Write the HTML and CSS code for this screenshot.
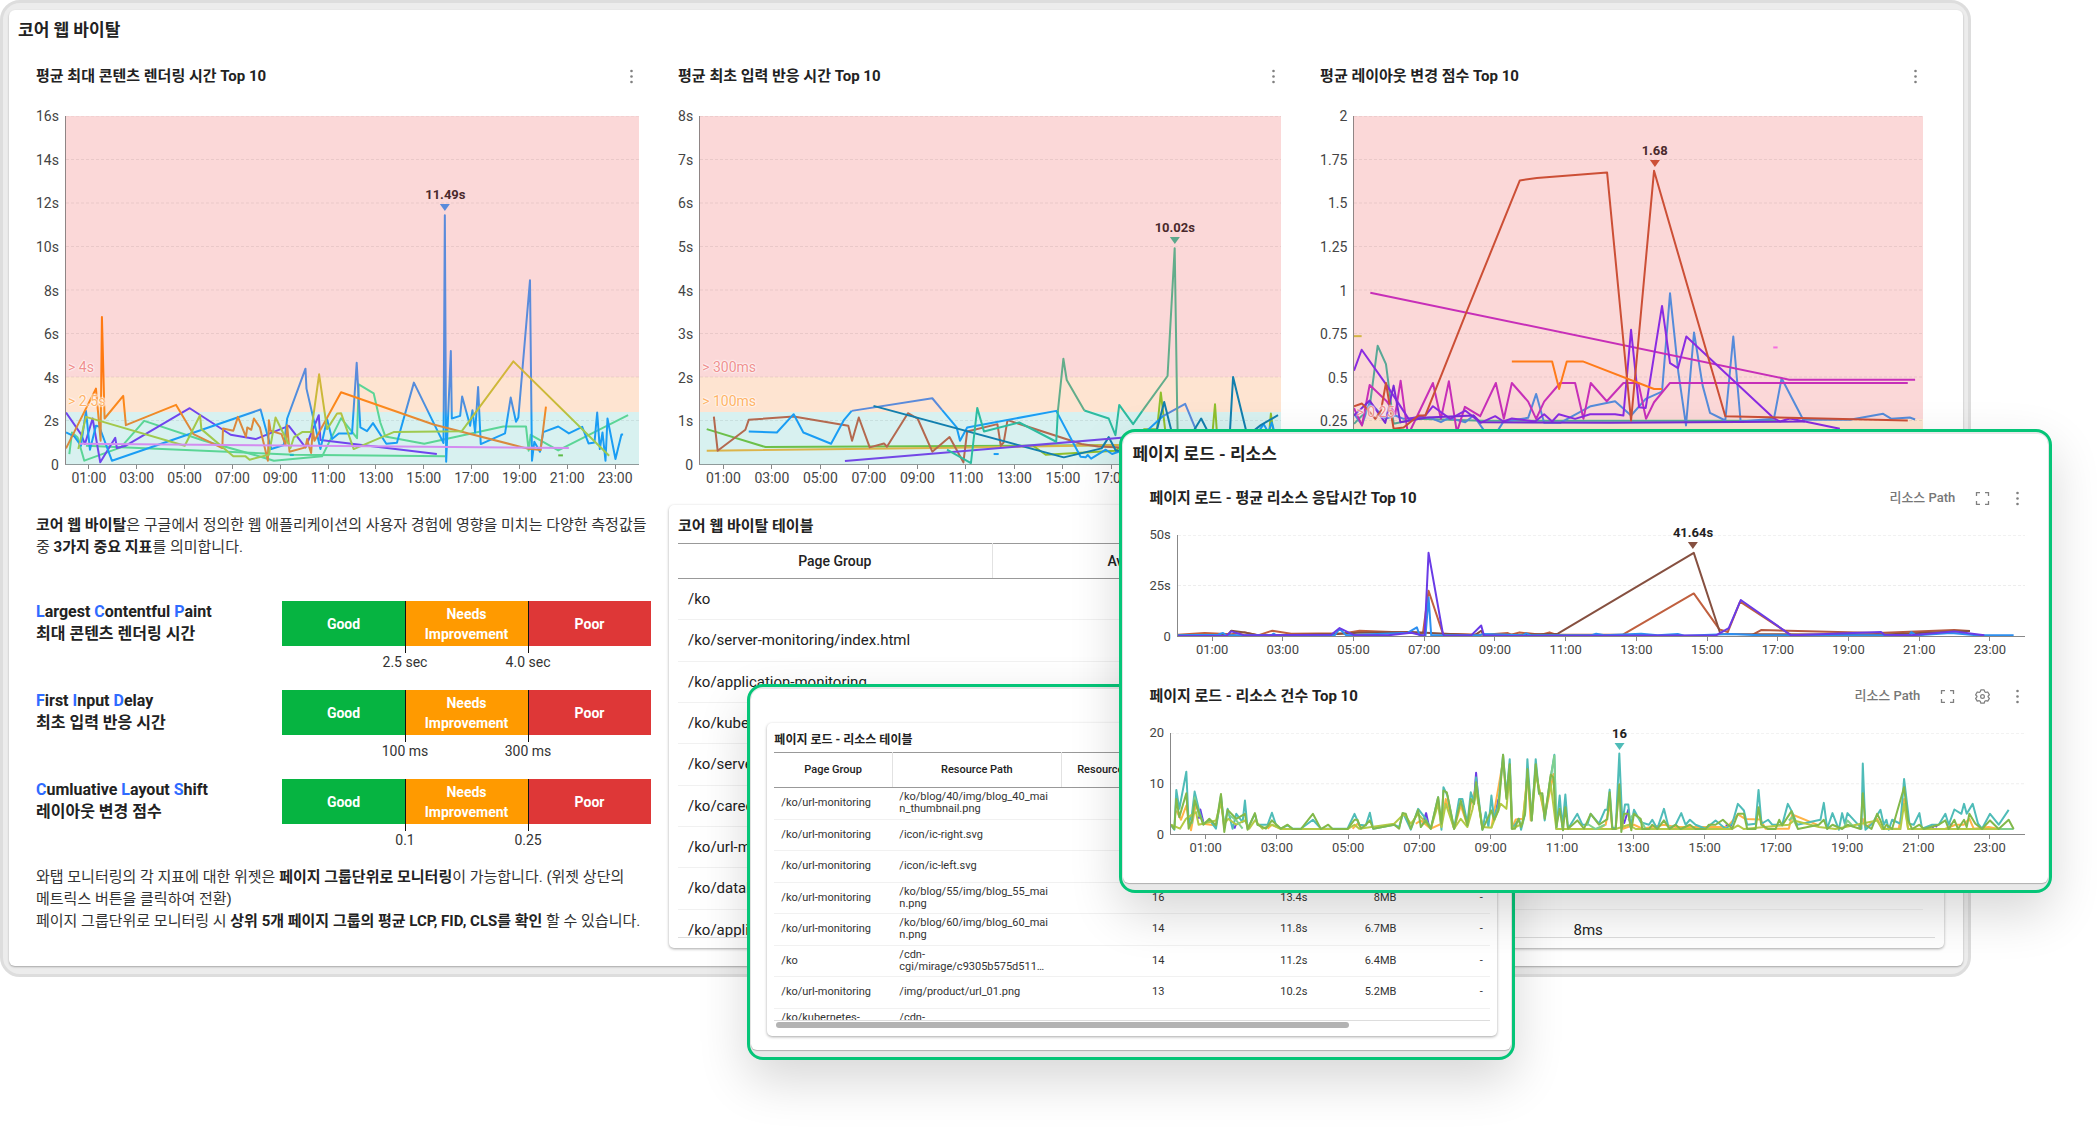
FILE: index.html
```html
<!DOCTYPE html>
<html lang="ko">
<head>
<meta charset="utf-8">
<meta name="viewport" content="width=device-width, initial-scale=1">
<title>코어 웹 바이탈</title>
<link rel="stylesheet" href="styles.css">
</head>
<body>
<svg class="sprite" aria-hidden="true">
  <symbol id="i-more" viewBox="0 0 15 15"><circle cx="7.500" cy="2" r="1.300"/><circle cx="7.500" cy="7.500" r="1.300"/><circle cx="7.500" cy="13" r="1.300"/></symbol>
  <symbol id="i-full" viewBox="0 0 15 15"><path d="M5 1.700H1.500V5M10 1.700h3.500V5M5 13.300H1.500V10M10 13.300h3.500V10" fill="none" stroke="currentColor" stroke-width="1.300"/></symbol>
  <symbol id="i-gear" viewBox="0 0 24 24"><g fill="none" stroke="currentColor" stroke-width="2" stroke-linejoin="round"><path d="M9.400 1.500h5.200l1 3 1.700 1 3.100-.700 2.600 4.500-2.100 2.300v1l2.100 2.300-2.600 4.500-3.100-.700-1.700 1-1 3H9.400l-1-3-1.700-1-3.100.700L1 14.900l2.100-2.300v-1L1 9.300l2.600-4.500 3.100.700 1.700-1z"/><circle cx="12" cy="12.100" r="3"/></g></symbol>
</svg>

<main class="stage">
  <section class="board">
    <div class="board-body">
      <h1 class="board-title">코어 웹 바이탈</h1>

      <div class="widgets">
        <article class="widget">
          <header class="widget-head"><h2>평균 최대 콘텐츠 렌더링 시간 Top 10</h2>
            <button class="icon-btn" type="button" aria-label="메뉴"><svg><use href="#i-more"/></svg></button></header>
          <div class="chart">
            <ul class="y-axis"><li>16s</li><li>14s</li><li>12s</li><li>10s</li><li>8s</li><li>6s</li><li>4s</li><li>2s</li><li>0</li></ul>
            <div class="plot plot-vitals">
              <svg viewBox="15 -673 1723 1048" preserveAspectRatio="none">
                <defs>
                  <linearGradient id="blue" gradientUnits="userSpaceOnUse" x1="0" y1="113" x2="0" y2="233"><stop offset="0" stop-color="#5a8bdb"/><stop offset=".8" stop-color="#4b90de"/><stop offset="1" stop-color="#1a9df4"/></linearGradient>
                  <linearGradient id="orange" gradientUnits="userSpaceOnUse" x1="0" y1="113" x2="0" y2="263"><stop offset="0" stop-color="#ff7a12"/><stop offset=".6" stop-color="#fb8a1c"/><stop offset="1" stop-color="#d9893f"/></linearGradient>
                  <linearGradient id="gold" gradientUnits="userSpaceOnUse" x1="0" y1="113" x2="0" y2="263"><stop offset="0" stop-color="#d2b63a"/><stop offset=".6" stop-color="#c6bb38"/><stop offset="1" stop-color="#9fca4e"/></linearGradient>
                </defs>
                <path class="grid" d="M15-673H1738M15-542H1738M15-411H1738M15-280H1738M15-149H1738M15-18H1738M15 113H1738M15 244H1738"/>
                <polyline stroke="#5bd596" points="25,345 33,280 50,295 70,365 180,325 250,245 430,305 590,350 640,365 785,352 842,237 890,297 895,135 940,162 960,250 975,292 1092,314 1330,262 1398,262 1406,335 1412,287 1495,334 1705,228"/>
                <polyline stroke="#5bd596" points="75,320 700,347 1155,352"/>
                <polyline stroke="#6f45ee" points="15,220 60,285 72,315 95,238 118,370 163,296 168,327 195,320 387,207 510,287 585,300 685,260 735,325 775,228 780,303 1130,345"/>
                <polyline stroke="url(#blue)" points="15,280 40,292 60,320 75,215 87,332 105,260 115,262 153,365 600,211 632,330 670,318 680,238 735,88 738,148 780,330 800,240 815,300 835,283 875,283 889,70 900,265 920,276 938,252 978,314 1010,311 1020,275 1061,130 1150,312 1154,-374 1158,368 1172,35 1175,238 1200,230 1206,172 1230,260 1237,213 1245,280 1254,143 1262,315 1335,283 1352,175 1368,248 1375,235 1410,-178 1416,365 1423,308 1440,338 1450,279 1495,262 1527,283 1567,263 1586,313 1604,310 1612,220 1620,330 1628,280 1637,365 1643,238 1667,360 1685,286 1690,286"/>
                <polyline stroke="url(#orange)" points="15,328 105,148 119,305 123,-68 131,238 187,170 195,258 346,197 398,285 485,327 487,268 518,275 532,233 556,293 560,265 572,272 580,238 598,265 622,365 625,243 630,275 663,285 675,318 680,258 687,338 735,325 740,300 745,320 752,342 757,270 762,305 842,159 1120,256 1400,328 1442,333 1458,202"/>
                <polyline stroke="url(#gold)" points="52,330 75,233 372,320 418,228 422,270 518,352 555,352 567,362 625,347 645,235 690,327 700,295 725,279 752,279 776,105 800,270 830,223 842,222 880,330 1000,279 1205,276 1360,66 1648,350"/>
                <polyline stroke="#d38df0" points="55,314 1527,327"/>
                <path stroke="#1fb8c4" d="M688 348h12"/><path stroke="#5dbb46" d="M1495 349h14"/>
              </svg>
              <span class="limit limit-poor">&gt; 4s</span><span class="limit limit-mid">&gt; 2.5s</span>
              <span class="pin pin-tint" style="left:66.2%;top:27.2%;color:#5a8bdb"><b>11.49s</b></span>
            </div>
            <ul class="x-axis"><li>01:00</li><li>03:00</li><li>05:00</li><li>07:00</li><li>09:00</li><li>11:00</li><li>13:00</li><li>15:00</li><li>17:00</li><li>19:00</li><li>21:00</li><li>23:00</li></ul>
          </div>
        </article>

        <article class="widget">
          <header class="widget-head"><h2>평균 최초 입력 반응 시간 Top 10</h2>
            <button class="icon-btn" type="button" aria-label="메뉴"><svg><use href="#i-more"/></svg></button></header>
          <div class="chart">
            <ul class="y-axis"><li>8s</li><li>7s</li><li>6s</li><li>5s</li><li>4s</li><li>3s</li><li>2s</li><li>1s</li><li>0</li></ul>
            <div class="plot plot-vitals">
              <svg viewBox="92 347 1383 1048" preserveAspectRatio="none">
                <path class="grid" d="M92 348H1475M92 478H1475M92 609H1475M92 740H1475M92 871H1475M92 1002H1475M92 1133H1475M92 1264H1475"/>
                <polyline stroke="#6cc04a" points="108,1290 248,1344 850,1340 1095,1338"/>
                <polyline stroke="#dcb44a" points="108,1355 700,1346 1095,1338"/>
                <polyline stroke="#8fbf2c" points="885,1340 915,1367 1080,1355 1150,1290 1180,1290 1189,1180 1200,1300 1310,1330 1318,1215 1324,1330 1445,1330 1451,1243 1460,1330"/>
                <polyline stroke="#b4694f" points="125,1252 134,1355 200,1292 208,1262 315,1252 445,1280 454,1325 470,1255 496,1345 530,1333 537,1343 587,1242 610,1258 645,1358 686,1314 719,1390 728,1297 800,1275 808,1340 815,1330 824,1263 1000,1335 1040,1342 1095,1345"/>
                <polyline stroke="#1a9df4" points="208,1297 275,1300 315,1245 338,1300 404,1334 435,1262 453,1235"/>
                <polyline stroke="#5a8bdb" points="453,1235 645,1197 668,1232"/>
                <polyline stroke="#1a9df4" points="668,1232 703,1285 711,1325 728,1285 940,1235 998,1373 1010,1375 1015,1368 1023,1379 1058,1352 1073,1365 1095,1355 1160,1290 1195,1250"/>
                <polyline stroke="#5a8bdb" points="1195,1250 1247,1214 1285,1330"/>
                <polyline stroke="#1a9df4" points="1420,1300 1434,1275 1445,1300 1453,1270 1462,1310"/>
                <polyline stroke="#127fae" points="505,1220 958,1375 1048,1348 1065,1314 1082,1355 1150,1350 1180,1290 1197,1208 1225,1350 1260,1310 1285,1258 1310,1320 1352,1330 1361,1133 1395,1310 1427,1278 1468,1248"/>
                <polyline stroke="#7348e6" points="437,1386 1095,1316 1200,1310"/>
                <polyline stroke="#2dbca0" points="680,1352 737,1392 752,1226 768,1297 852,1270 940,1328 944,1235"/>
                <polyline stroke="#62ad8b" points="944,1235 957,1078 965,1142 1007,1234"/>
                <polyline stroke="#2dbca0" points="1007,1234 1065,1258 1081,1308 1090,1217 1123,1275 1145,1235"/>
                <polyline stroke="#62ad8b" points="1145,1235 1205,1130 1222,745 1228,1235 1229,1300"/>
                <path stroke="#1a9df4" d="M791 1365h12"/>
              </svg>
              <span class="limit limit-poor">&gt; 300ms</span><span class="limit limit-mid">&gt; 100ms</span>
              <span class="pin pin-tint" style="left:81.7%;top:36.7%;color:#5ba88c"><b>10.02s</b></span>
            </div>
            <ul class="x-axis"><li>01:00</li><li>03:00</li><li>05:00</li><li>07:00</li><li>09:00</li><li>11:00</li><li>13:00</li><li>15:00</li><li>17:00</li><li>19:00</li><li>21:00</li><li>23:00</li></ul>
          </div>
        </article>

        <article class="widget">
          <header class="widget-head"><h2>평균 레이아웃 변경 점수 Top 10</h2>
            <button class="icon-btn" type="button" aria-label="메뉴"><svg><use href="#i-more"/></svg></button></header>
          <div class="chart">
            <ul class="y-axis"><li>2</li><li>1.75</li><li>1.5</li><li>1.25</li><li>1</li><li>0.75</li><li>0.5</li><li>0.25</li><li>0</li></ul>
            <div class="plot plot-shift">
              <svg viewBox="11 -612 1708 1048" preserveAspectRatio="none">
                <path class="grid" d="M11-611H1719M11-481H1719M11-350H1719M11-219H1719M11-88H1719M11 43H1719M11 174H1719M11 305H1719"/>
                <polyline stroke="#58a896" points="11,315 35,290 58,265 82,80 107,135 130,315 200,300 400,306 1280,306"/>
                <polyline stroke="#558bda" points="11,285 35,318 58,250 105,300 135,290 160,300 240,297 272,310 296,297 345,310 370,290 405,340 440,340 460,308 534,297 558,225 582,312 630,312 722,262 795,247 843,290 887,240 936,218 960,-78 985,160 1008,320 1032,40 1058,200 1080,282 1126,305 1150,52 1172,308 1272,300 1295,178 1360,303 1500,303 1600,285 1625,300 1680,296 1696,302"/>
                <polyline stroke="#c72fb8" points="11,268 35,320 58,198 110,248 135,285 151,185 172,340 180,335 248,192 272,300 296,187 320,340 344,264 390,292 437,192 461,300 485,192 534,248 558,300 582,248 630,192 675,192 700,300 722,192 770,247 820,192 865,192 888,300 912,250 960,192 1674,192"/>
                <polyline stroke="#c72fb8" points="60,-80 1318,182 1696,182"/>
                <polyline stroke="#8a2be2" points="11,155 34,92 110,200 175,300 225,290 248,262 300,300 345,275 391,312 435,292 460,308 485,299 555,308 582,286 606,308 626,286 675,300 720,286 795,286 820,290 843,32 867,265 887,267 936,-40 960,132 984,147 1009,52 1270,297 1290,308 1320,299 1365,308 1470,330"/>
                <polyline stroke="#7a2bd8" points="11,290 58,245 105,312 130,200 150,310 230,296 370,290 390,310 780,312 1365,308"/>
                <polyline stroke="#cc4f36" points="11,262 35,254 50,270 75,300 92,275 107,192 130,330 160,326 205,290 225,290 345,-12 509,-418 560,-425 771,-442 843,305 912,-447 1126,292 1674,305"/>
                <polyline stroke="#ff7b19" points="485,127 606,127 627,210 650,127 698,127 912,210 936,210"/>
                <path stroke="#d2b545" d="M11 51h23"/><path stroke="#f56ee0" d="M1270 85h13"/>
              </svg>
              <span class="limit limit-shift">&gt; 0.25</span>
              <span class="pin pin-tint" style="left:52.8%;top:14.7%;color:#cc4f36"><b>1.68</b></span>
            </div>
            <ul class="x-axis"><li>01:00</li><li>03:00</li><li>05:00</li><li>07:00</li><li>09:00</li><li>11:00</li><li>13:00</li><li>15:00</li><li>17:00</li><li>19:00</li><li>21:00</li><li>23:00</li></ul>
          </div>
        </article>
      </div>

      <div class="details">
        <div class="guide">
          <p><strong>코어 웹 바이탈</strong>은 구글에서 정의한 웹 애플리케이션의 사용자 경험에 영향을 미치는 다양한 측정값들 중 <strong>3가지 중요 지표</strong>를 의미합니다.</p>
          <div class="metrics">
            <div class="metric">
              <h3><i>L</i>argest <i>C</i>ontentful <i>P</i>aint<br>최대 콘텐츠 렌더링 시간</h3>
              <div class="scale"><span class="good">Good</span><span class="mid">Needs Improvement</span><span class="poor">Poor</span><em>2.5 sec</em><em>4.0 sec</em></div>
            </div>
            <div class="metric">
              <h3><i>F</i>irst <i>I</i>nput <i>D</i>elay<br>최초 입력 반응 시간</h3>
              <div class="scale"><span class="good">Good</span><span class="mid">Needs Improvement</span><span class="poor">Poor</span><em>100 ms</em><em>300 ms</em></div>
            </div>
            <div class="metric">
              <h3><i>C</i>umluative <i>L</i>ayout <i>S</i>hift<br>레이아웃 변경 점수</h3>
              <div class="scale"><span class="good">Good</span><span class="mid">Needs Improvement</span><span class="poor">Poor</span><em>0.1</em><em>0.25</em></div>
            </div>
          </div>
          <p>와탭 모니터링의 각 지표에 대한 위젯은 <strong>페이지 그룹단위로 모니터링</strong>이 가능합니다. (위젯 상단의 메트릭스 버튼을 클릭하여 전환)<br>페이지 그룹단위로 모니터링 시 <strong>상위 5개 페이지 그룹의 평균 LCP, FID, CLS를 확인</strong> 할 수 있습니다.</p>
        </div>

        <article class="card vitals-card">
          <h2>코어 웹 바이탈 테이블</h2>
          <div class="scroller">
            <table>
              <colgroup><col class="c-group"><col><col><col></colgroup>
              <thead><tr><th>Page Group</th><th>Average LCP</th><th></th><th></th></tr></thead>
              <tbody>
                <tr><td>/ko</td><td></td><td></td><td></td></tr>
                <tr><td>/ko/server-monitoring/index.html</td><td></td><td></td><td></td></tr>
                <tr><td>/ko/application-monitoring</td><td></td><td></td><td></td></tr>
                <tr><td>/ko/kubernetes-monitoring</td><td></td><td></td><td></td></tr>
                <tr><td>/ko/server-monitoring</td><td></td><td></td><td></td></tr>
                <tr><td>/ko/career</td><td></td><td></td><td></td></tr>
                <tr><td>/ko/url-monitoring</td><td></td><td></td><td></td></tr>
                <tr><td>/ko/database-monitoring</td><td></td><td></td><td></td></tr>
                <tr><td>/ko/application</td><td></td><td>8ms</td><td></td></tr>
              </tbody>
            </table>
          </div>
        </article>
      </div>
    </div>
  </section>

  <section class="window window-table">
    <div class="window-body">
      <article class="card resource-card">
        <h2>페이지 로드 - 리소스 테이블</h2>
        <div class="scroller">
          <table>
            <colgroup><col class="r-group"><col class="r-path"><col class="r-count"><col class="r-time"><col class="r-size"><col></colgroup>
            <thead><tr><th>Page Group</th><th>Resource Path</th><th>Resource Count</th><th></th><th></th><th></th></tr></thead>
            <tbody>
              <tr><td>/ko/url-monitoring</td><td>/ko/blog/40/img/blog_40_mai<br>n_thumbnail.png</td><td></td><td></td><td></td><td></td></tr>
              <tr><td>/ko/url-monitoring</td><td>/icon/ic-right.svg</td><td></td><td></td><td></td><td></td></tr>
              <tr><td>/ko/url-monitoring</td><td>/icon/ic-left.svg</td><td></td><td></td><td></td><td></td></tr>
              <tr><td>/ko/url-monitoring</td><td>/ko/blog/55/img/blog_55_mai<br>n.png</td><td>16</td><td>13.4s</td><td>8MB</td><td>-</td></tr>
              <tr><td>/ko/url-monitoring</td><td>/ko/blog/60/img/blog_60_mai<br>n.png</td><td>14</td><td>11.8s</td><td>6.7MB</td><td>-</td></tr>
              <tr><td>/ko</td><td>/cdn-<br>cgi/mirage/c9305b575d511…</td><td>14</td><td>11.2s</td><td>6.4MB</td><td>-</td></tr>
              <tr><td>/ko/url-monitoring</td><td>/img/product/url_01.png</td><td>13</td><td>10.2s</td><td>5.2MB</td><td>-</td></tr>
              <tr><td>/ko/kubernetes-<br>monitoring</td><td>/cdn-<br>cgi/mirage</td><td></td><td></td><td></td><td></td></tr>
            </tbody>
          </table>
        </div>
        <div class="thumb"></div>
      </article>
    </div>
  </section>

  <section class="window window-charts">
    <div class="window-body">
      <h1 class="board-title">페이지 로드 - 리소스</h1>
      <article class="widget">
        <header class="widget-head"><h2>페이지 로드 - 평균 리소스 응답시간 Top 10</h2>
          <span class="metric-name">리소스 Path</span>
          <button class="icon-btn" type="button" aria-label="전체 화면"><svg><use href="#i-full"/></svg></button>
          <button class="icon-btn" type="button" aria-label="메뉴"><svg><use href="#i-more"/></svg></button></header>
        <div class="chart">
          <ul class="y-axis"><li>50s</li><li>25s</li><li>0</li></ul>
          <div class="plot">
            <svg viewBox="200 346 2544 306" preserveAspectRatio="none">
              <path class="grid" d="M200 347H2744M200 499H2744"/>
              <polyline stroke="#c0603f" points="200,648 280,643 360,647 400,641 440,650 483,636 540,645 700,644 745,636 900,642 935,645 952,515 995,645 1120,648 1190,643 1200,648 1225,641 1250,644 1290,648 1315,641 1335,648 1535,648 1748,523 1825,632 1850,640 1887,548 2040,649"/>
              <polyline stroke="#b55a40" points="1925,648 1950,634 2300,643 2530,634 2577,637"/>
              <polyline stroke="#865040" points="200,650 350,648 360,636 400,641 440,650 680,646 740,642 900,640 1090,650 1110,636 1118,650 1340,645 1748,400 1828,646 2300,648 2500,640 2577,637"/>
              <polyline stroke="#2d8ff0" points="200,650 320,648 335,643 345,650 480,650 487,645 495,650 670,650 685,630 705,650 890,642 917,626 925,650 943,650 952,535 960,650 1105,650 1115,646 1235,650 1245,644 1260,650 1440,650 1455,645 1480,650 1590,645 1640,650 1700,646 1720,651 1860,646 1950,650 2395,650 2401,640 2415,650 2520,643 2600,650 2708,650"/>
              <polyline stroke="#6a3be6" points="200,652 345,652 360,638 400,650 660,648 685,628 730,650 830,650 900,642 940,652 952,400 995,645 1000,652 1080,650 1110,620 1118,650 1200,652 1815,650 1853,628 1889,543 2040,650 2310,640 2320,648 2400,650 2530,638 2620,650"/>
            </svg>
            <span class="pin" style="left:60.8%;top:13.7%;color:#865040"><b>41.64s</b></span>
          </div>
          <ul class="x-axis"><li>01:00</li><li>03:00</li><li>05:00</li><li>07:00</li><li>09:00</li><li>11:00</li><li>13:00</li><li>15:00</li><li>17:00</li><li>19:00</li><li>21:00</li><li>23:00</li></ul>
        </div>
      </article>
      <article class="widget">
        <header class="widget-head"><h2>페이지 로드 - 리소스 건수 Top 10</h2>
          <span class="metric-name">리소스 Path</span>
          <button class="icon-btn" type="button" aria-label="전체 화면"><svg><use href="#i-full"/></svg></button>
          <button class="icon-btn" type="button" aria-label="설정"><svg><use href="#i-gear"/></svg></button>
          <button class="icon-btn" type="button" aria-label="메뉴"><svg><use href="#i-more"/></svg></button></header>
        <div class="chart">
          <ul class="y-axis"><li>20</li><li>10</li><li>0</li></ul>
          <div class="plot">
            <svg viewBox="15 26 2565 305" preserveAspectRatio="none">
              <path class="grid" d="M15 27H2580M15 179H2580"/>
              <path stroke="#6a3be6" d="M98 285L103 257L112 295M205 315L211 300M770 300L781 268L790 310M925 230L931 146L938 240M985 290L998 225M1375 300L1388 258L1395 310M1680 305h20M2300 312L2308 305L2315 310M2350 318L2358 300"/>
              <path stroke="#ffb347" d="M31 260L45 288L61 245L75 320L90 240L112 300L150 305L165 230L175 315M305 315L318 303L345 315M560 315L575 300L590 315M750 300L765 290L795 315L827 300L840 225L865 315L885 245L905 305L915 240L931 190L950 315M977 312L1012 110L1022 220L1032 130L1040 315L1050 287L1072 285L1085 150L1095 290L1110 140L1137 280L1163 150L1172 315M1300 315L1320 303L1332 240L1340 315L1350 315L1361 180L1372 315L1405 303L1430 315L1495 303L1530 310L1600 310L1685 310L1717 272L1740 286L1785 287L1800 315L1870 315L1880 272L1960 305M2080 315L2092 285L2100 312L2135 285L2150 315L2200 315L2216 225L2228 315M2340 315L2370 303L2395 303L2412 285L2425 315L2470 310L2500 316"/>
              <polyline stroke="#4fbcb8" points="15,305 25,318 31,198 40,255 61,143 68,300 78,270 86,203 100,262 112,300 132,290 150,315 165,215 175,310 185,255 200,315 211,270 230,295 237,230 245,315 267,270 275,303 305,303 318,267 330,303 345,315 365,305 380,315 405,315 441,288 465,315 545,315 566,270 580,303 600,305 612,267 622,315 685,303 700,310 712,268 735,318 757,255 780,285 795,315 817,220 827,318 833,190 845,215 865,315 880,225 890,225 905,300 915,205 925,235 931,160 950,318 960,265 968,310 977,215 985,285 998,240 1012,92 1022,215 1032,105 1040,315 1060,285 1066,318 1078,270 1085,105 1098,290 1110,105 1120,210 1130,215 1137,290 1150,190 1166,92 1172,315 1182,215 1190,310 1199,212 1207,315 1235,270 1250,303 1265,303 1275,270 1300,300 1318,258 1325,258 1332,197 1340,310 1350,316 1361,88 1370,300 1378,242 1388,242 1395,310 1405,258 1425,295 1450,303 1460,288 1475,315 1495,255 1510,315 1530,303 1547,268 1560,303 1573,288 1590,303 1620,315 1650,290 1680,315 1700,300 1717,240 1735,260 1745,303 1770,300 1779,198 1788,300 1808,288 1820,303 1850,303 1867,240 1880,265 1895,303 1965,288 1975,237 1985,315 2001,268 2020,318 2030,268 2038,300 2046,268 2080,305 2088,315 2092,118 2100,318 2120,300 2145,258 2155,303 2163,288 2170,318 2180,288 2205,300 2216,165 2232,300 2245,303 2262,268 2270,315 2300,303 2320,303 2340,270 2350,303 2367,257 2388,270 2396,240 2404,270 2422,240 2438,300 2450,315 2474,270 2500,303 2530,258"/>
              <polyline stroke="#b3ca45" points="15,303 42,315 60,285 75,275 90,265 98,303 150,290 165,235 175,300 187,285 211,303 237,290 250,315 267,290 290,315 318,303 345,316 545,316 566,303 580,315 685,300 715,270 735,300 757,270 795,315 817,240 827,310 840,240 865,315 885,285 905,310 920,257 931,200 950,310 977,312 1005,240 1022,255 1032,150 1040,315 1070,300 1085,160 1098,285 1110,150 1137,270 1155,180 1172,316 1350,316 1390,303 1410,316 1700,316 1717,305 1735,316 1870,303 1885,290 1960,310 2010,316 2135,290 2150,316 2205,316 2216,240 2228,316 2500,316"/>
              <path stroke="#7fd08e" d="M78 300L86 220L100 280M185 270L211 290L230 315M1150 190L1166 95L1172 310M1265 300L1290 316L1318 303M1388 290L1405 270L1425 288L1440 316M1870 290L1880 280L1895 310M2036 310L2046 290L2065 310M2500 316H2545"/>
              <polyline stroke="#82b94a" points="15,303 25,316 31,225 40,280 61,208 68,315 78,290 86,230 112,303 130,285 150,305 165,210 175,325 185,258 211,285 237,270 245,318 267,268 275,303 300,315 318,290 345,315 365,303 380,316 405,316 441,270 465,316 487,303 500,316 545,316 566,288 575,288 585,315 600,303 612,290 622,315 685,303 700,315 710,268 720,270 735,315 757,258 765,310 780,290 795,315 817,220 827,300 833,200 843,205 865,315 885,230 905,305 915,225 925,240 931,175 950,318 977,260 985,288 998,260 1012,92 1022,225 1032,120 1038,315 1048,315 1058,285 1066,310 1078,270 1085,135 1098,290 1110,120 1120,208 1130,208 1137,285 1155,152 1163,160 1172,310 1182,255 1192,320 1199,250 1207,315 1235,290 1255,315 1275,270 1300,303 1325,286 1332,205 1340,316 1350,316 1361,182 1367,325 1375,270 1388,270 1397,320 1405,270 1425,285 1430,316 1450,316 1460,303 1475,316 1495,290 1512,316 1530,303 1545,316 1573,303 1590,316 1620,316 1630,303 1650,303 1672,288 1700,315 1717,270 1735,270 1745,316 1770,316 1779,250 1787,303 1808,316 1830,316 1841,288 1850,305 1878,262 1897,316 1960,303 1975,288 1985,316 2001,303 2030,316 2046,303 2085,316 2092,208 2100,303 2118,316 2135,270 2145,290 2155,316 2163,303 2180,316 2216,190 2228,290 2240,316 2262,303 2275,316 2320,303 2340,290 2350,316 2367,288 2378,316 2396,288 2404,310 2412,270 2430,300 2450,316 2474,290 2500,316 2530,288 2545,316"/>
            </svg>
            <span class="pin" style="left:52.5%;top:17%;color:#4fbcb8"><b>16</b></span>
          </div>
          <ul class="x-axis"><li>01:00</li><li>03:00</li><li>05:00</li><li>07:00</li><li>09:00</li><li>11:00</li><li>13:00</li><li>15:00</li><li>17:00</li><li>19:00</li><li>21:00</li><li>23:00</li></ul>
        </div>
      </article>
    </div>
  </section>
</main>
</body>
</html>
```
FILE: styles.css
```css
* { box-sizing: border-box; }

body {
  margin: 0;
  background: #fff;
  color: #222;
  font-family: Roboto, "Noto Sans CJK KR", sans-serif;
  font-size: 15px;
  line-height: 22px;
}

h1, h2, h3, p, ul { margin: 0; padding: 0; }
ul { list-style: none; }
.sprite { display: none; }

.stage {
  position: relative;
  min-height: 100vh;
  padding-bottom: 166px;
  overflow: hidden;
}

/* Main dashboard */
.board {
  width: 94%;
  padding: 7px 5px 8px 6px;
  border: 3px solid #ddd;
  border-radius: 20px;
  background: #ececec;
}

.board-body {
  padding: 8px 0 18px;
  border-radius: 6px;
  background: #fff;
  box-shadow: 0 1px 2px rgba(0, 0, 0, .3);
}

.board-title {
  margin-left: 9px;
  font-size: 17px;
  font-weight: 700;
  line-height: 24px;
}

.widgets {
  display: grid;
  grid-template-columns: repeat(3, minmax(0, 1fr));
  gap: 39px;
  padding: 22px 40px 17px 27px;
}

.widget-head {
  display: flex;
  align-items: center;
  gap: 20px;
  height: 24px;
  margin-bottom: 28px;
}

.widget-head h2 {
  flex: 1;
  font-size: 15px;
  font-weight: 700;
}

.icon-btn {
  display: flex;
  width: 15px;
  height: 15px;
  padding: 0;
  border: 0;
  background: none;
  color: #808080;
  cursor: pointer;
}

.icon-btn svg { width: 15px; height: 15px; fill: currentColor; }

/* Charts */
.chart {
  display: grid;
  grid-template-columns: auto minmax(0, 1fr);
  color: #444;
  font-size: 14px;
}

.y-axis {
  display: flex;
  flex-direction: column;
  justify-content: space-between;
  padding-right: 6px;
  text-align: right;
}

.y-axis li { height: 0; line-height: 0; }

.plot {
  position: relative;
  height: 349px;
  border-left: 1px solid #8f8585;
  border-bottom: 1px solid #8f9a9a;
}

.plot > svg { display: block; width: 100%; height: 100%; }

.plot-vitals {
  background: linear-gradient(#fbd8d8 75%, #fee4d1 75% 85%, #d8f1f0 85%);
}

.plot-shift { background: linear-gradient(#fbd8d8 87%, #fee4d1 87%); }

.plot polyline, .plot path {
  fill: none;
  stroke-width: 2;
  stroke-linejoin: round;
  vector-effect: non-scaling-stroke;
}

.plot .grid {
  stroke: rgba(0, 0, 0, .07);
  stroke-width: 1;
  stroke-dasharray: 3 2;
}

.x-axis {
  grid-column: 2;
  display: grid;
  grid-template-columns: repeat(12, minmax(0, 1fr));
  line-height: 19px;
}

.x-axis li {
  display: flex;
  flex-direction: column;
  align-items: center;
}

.x-axis li::before { content: ""; width: 1px; height: 4px; background: #888; }

.limit {
  position: absolute;
  left: 2px;
  transform: translateY(-50%);
  text-shadow: 0 0 2px #fff, 0 0 2px #fff, 0 0 2px #fff;
}

.limit-poor { top: 72%; color: #f0908f; }
.limit-mid { top: 82%; color: #ffb366; }
.limit-shift { top: 85%; color: #f0908f; }

.pin {
  position: absolute;
  display: flex;
  flex-direction: column;
  align-items: center;
  gap: 1px;
  transform: translate(-50%, -100%);
  font-size: 13px;
  line-height: 16px;
}

.pin b { color: #222; }
.pin-tint b { color: #4a2a2c; }

.pin::after {
  content: "";
  border: 5px solid transparent;
  border-top: 7px solid currentColor;
  border-bottom: 0;
}

/* Lower half of the dashboard */
.details {
  display: grid;
  grid-template-columns: minmax(0, 615fr) minmax(0, 1275fr);
  gap: 18px;
  padding: 0 19px 0 27px;
}

.guide { padding-top: 9px; color: #333; word-break: keep-all; }
.guide strong { color: #222; }

.metrics {
  display: grid;
  gap: 19px;
  padding: 43px 0 17px;
}

.metric {
  display: grid;
  grid-template-columns: minmax(0, 2fr) minmax(0, 3fr);
}

.metric h3 { color: #222; font-size: 16px; font-weight: 700; }
.metric i { color: #2f6bff; font-style: normal; }

.scale {
  display: grid;
  grid-template-columns: repeat(6, minmax(0, 1fr));
  font-size: 14px;
}

.scale span {
  grid-column: span 2;
  display: flex;
  align-items: center;
  justify-content: center;
  height: 45px;
  padding: 0 14px;
  color: #fff;
  font-weight: 700;
  line-height: 20px;
  text-align: center;
}

.good { background: #06b441; }
.mid { background: #ff9a00; }
.poor { background: #de3737; }

.scale em {
  grid-column: 2 / span 2;
  font-style: normal;
  line-height: 18px;
  text-align: center;
}

.scale em + em { grid-column: 4 / span 2; }

.scale em::before {
  content: "";
  display: block;
  width: 1px;
  height: 52px;
  margin: -45px auto 0;
  background: #111;
}

/* Table cards */
.card {
  border-radius: 5px;
  background: #fff;
  box-shadow: 0 1px 3px rgba(0, 0, 0, .35);
}

.card h2 { font-weight: 700; }
.scroller { overflow: hidden; border-bottom: 1px solid #ddd; }

table {
  table-layout: fixed;
  border-collapse: collapse;
}

th {
  border-top: 1px solid #999;
  border-bottom: 1px solid #999;
  border-right: 1px solid #e2e2e2;
  font-weight: 500;
}

th:last-child { border-right: 0; }
td { border-bottom: 1px solid #f1f1f1; text-align: right; }
td:first-child { text-align: left; }

.vitals-card { padding: 9px 9px 10px; }
.vitals-card h2 { margin-bottom: 5px; font-size: 15px; line-height: 24px; }
.vitals-card .scroller { height: 395px; }
.vitals-card table { width: calc(100% - 12px); height: 408px; }
.vitals-card th { height: 35px; padding: 0; font-size: 14px; }
.vitals-card td { padding: 0 10px; }
.c-group { width: 314px; }

.resource-card { padding: 7px 7px 8px; font-size: 11px; line-height: 12px; }
.resource-card h2 { margin-bottom: 2px; font-size: 12px; line-height: 20px; }
.resource-card .scroller { height: 269px; }
.resource-card table { width: 100%; height: 288px; }
.resource-card th { height: 35px; padding: 0; }
.resource-card td { height: 31px; padding: 0 7px; color: #333; }
.resource-card td:nth-child(2) { text-align: left; }
.r-group { width: 118px; }
.r-path { width: 169px; }
.r-count { width: 110px; }
.r-time { width: 143px; }
.r-size { width: 89px; }

.thumb {
  width: 80%;
  height: 6px;
  margin: 1px 0 0 2px;
  border-radius: 3px;
  background: #b3b3b3;
}

/* Floating windows */
.window {
  position: absolute;
  padding: 2px 1px 7px;
  border: 3px solid #05c578;
  border-radius: 16px;
  background: #e9e9e9;
  box-shadow: 0 20px 50px rgba(0, 0, 0, .16);
}

.window-body {
  border-radius: 10px 10px 6px 6px;
  background: #fff;
  box-shadow: 0 1px 1px rgba(0, 0, 0, .25);
}

.window-table { top: 684px; left: 35.640%; width: 36.600%; }
.window-table .window-body { padding: 34px 14px 14px 16px; }

.window-charts { top: 429px; left: 53.380%; width: 44.490%; }
.window-charts .window-body { padding: 8px 23px 1px 9px; }
.window-charts .board-title { margin: 0 0 20px; }
.window-charts .widget { margin: 0 0 25px 17px; }
.window-charts .widget-head { margin-bottom: 25px; }
.window-charts .chart { font-size: 13px; }
.window-charts .plot { height: 102px; border-color: #888; }
.window-charts .x-axis { line-height: 18px; }

.metric-name { color: #777; font-size: 13px; font-weight: 500; }
```
